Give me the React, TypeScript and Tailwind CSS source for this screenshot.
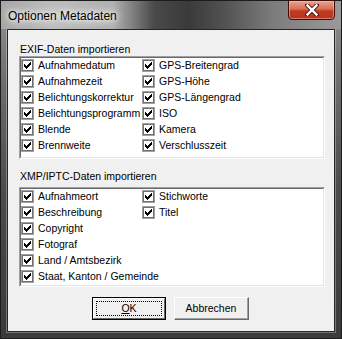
import React from 'react';

const exifLeft = ['Aufnahmedatum', 'Aufnahmezeit', 'Belichtungskorrektur', 'Belichtungsprogramm', 'Blende', 'Brennweite'];
const exifRight = ['GPS-Breitengrad', 'GPS-Höhe', 'GPS-Längengrad', 'ISO', 'Kamera', 'Verschlusszeit'];
const xmpLeft = ['Aufnahmeort', 'Beschreibung', 'Copyright', 'Fotograf', 'Land / Amtsbezirk', 'Staat, Kanton / Gemeinde'];
const xmpRight = ['Stichworte', 'Titel'];

// classic 7x7 check mark, one rect per pixel run
const checkPixels: [number, number, number][] = [
  [6, 0, 1],
  [5, 1, 2],
  [0, 2, 1], [4, 2, 3],
  [0, 3, 2], [3, 3, 3],
  [0, 4, 5],
  [1, 5, 3],
  [2, 6, 1],
];

function CheckBox() {
  return (
    <div className="w-[13px] h-[13px] shrink-0 border border-[#a0a0a0] bg-white">
      <div className="w-full h-full border border-[#6f6f6f] flex items-center justify-center">
        <svg width="7" height="7" viewBox="0 0 7 7" shapeRendering="crispEdges">
          {checkPixels.map(([x, y, w], i) => (
            <rect key={i} x={x} y={y} width={w} height={1} fill="#000" />
          ))}
        </svg>
      </div>
    </div>
  );
}

function Row({ label }: { label: string }) {
  return (
    <div className="h-[16px] flex items-center">
      <CheckBox />
      <span className="ml-[4px] whitespace-nowrap leading-[13px]">{label}</span>
    </div>
  );
}

function ListBox({ left, right, height }: { left: string[]; right: string[]; height: string }) {
  return (
    <div className={`ml-[11px] w-[306px] ${height} border-t border-l border-[#a0a0a0] border-b border-r border-b-white border-r-white`}>
      <div className="w-full h-full bg-white border-t border-l border-[#696969] border-b border-r border-b-[#e3e3e3] border-r-[#e3e3e3] flex">
        <div className="w-[121px] flex flex-col -mt-[1px]">
          {left.map((l) => <Row key={l} label={l} />)}
        </div>
        <div className="flex flex-col -mt-[1px]">
          {right.map((l) => <Row key={l} label={l} />)}
        </div>
      </div>
    </div>
  );
}

export default function App() {
  return (
    <div
      className="w-[342px] h-[339px] border border-[#1c1c1c] flex flex-col text-black"
      style={{ fontFamily: '"Liberation Sans", Arial, sans-serif' }}
    >
      <div className="flex-1 flex flex-col bg-[linear-gradient(to_bottom,#949494_0%,#6c6c6c_25%,#4c4c4c_55%,#3a3a3a_100%)]">
        {/* title bar */}
        <div className="relative h-[28px] bg-[linear-gradient(to_right,#a6a6a6_0%,#bdbdbd_15%,#b0b0b0_33%,#4a4a4a_45%,#3a3a3a_55%,#505050_65%,#7c7c7c_80%,#9a9a9a_100%)]">
          <span className="absolute left-[7px] top-[8px] text-[12px] leading-[14px] [text-shadow:0_0_8px_#fff,0_0_12px_#fff,0_0_4px_#fff]">
            Optionen Metadaten
          </span>
          <div className="absolute right-[6px] top-[-1px] w-[47px] h-[20px] rounded-b-[4px] border border-[#3c1008] bg-[linear-gradient(to_bottom,#e8a392_0%,#d86d58_45%,#c03c22_55%,#b8341c_100%)] flex items-center justify-center shadow-[inset_0_0_0_1px_rgba(255,200,190,0.5)]">
            <svg width="14" height="12" viewBox="0 0 14 12">
              <path d="M2 1 L12 11 M12 1 L2 11" stroke="#4a1a10" strokeWidth="4.2" strokeLinecap="square" />
              <path d="M2.5 1.5 L11.5 10.5 M11.5 1.5 L2.5 10.5" stroke="#fff" strokeWidth="2.4" strokeLinecap="square" />
            </svg>
          </div>
        </div>

        {/* client area */}
        <div className="mx-[6px] mb-[6px] flex-1 border border-[#262626] shadow-[0_0_0_1px_rgba(255,255,255,0.3)] bg-[#f0f0f0] flex flex-col text-[10.5px]">
          <div className="mt-[13px] ml-[12px] h-[13px] leading-[13px]">EXIF-Daten importieren</div>
          <ListBox left={exifLeft} right={exifRight} height="h-[103px]" />

          <div className="mt-[11px] ml-[12px] h-[13px] leading-[13px]">XMP/IPTC-Daten importieren</div>
          <div className="mt-[4px]">
            <ListBox left={xmpLeft} right={xmpRight} height="h-[100px]" />
          </div>

          <div className="mt-[10px] flex justify-center gap-[8px] pr-[1px]">
            <button className="w-[74px] h-[23px] border border-black bg-[#f0f0f0] p-0">
              <div className="w-full h-full border-t border-l border-white border-b border-r border-b-[#696969] border-r-[#696969] p-[2px]">
                <div className="w-full h-full border border-dotted border-black flex items-center justify-center leading-[13px]">
                  <span><span className="underline">O</span>K</span>
                </div>
              </div>
            </button>
            <button className="w-[75px] h-[23px] border-t border-l border-white border-b border-r border-b-[#696969] border-r-[#696969] bg-[#f0f0f0] p-0">
              <div className="w-full h-full border-b border-r border-[#a0a0a0] flex items-center justify-center leading-[13px]">
                Abbrechen
              </div>
            </button>
          </div>
        </div>
      </div>
    </div>
  );
}
